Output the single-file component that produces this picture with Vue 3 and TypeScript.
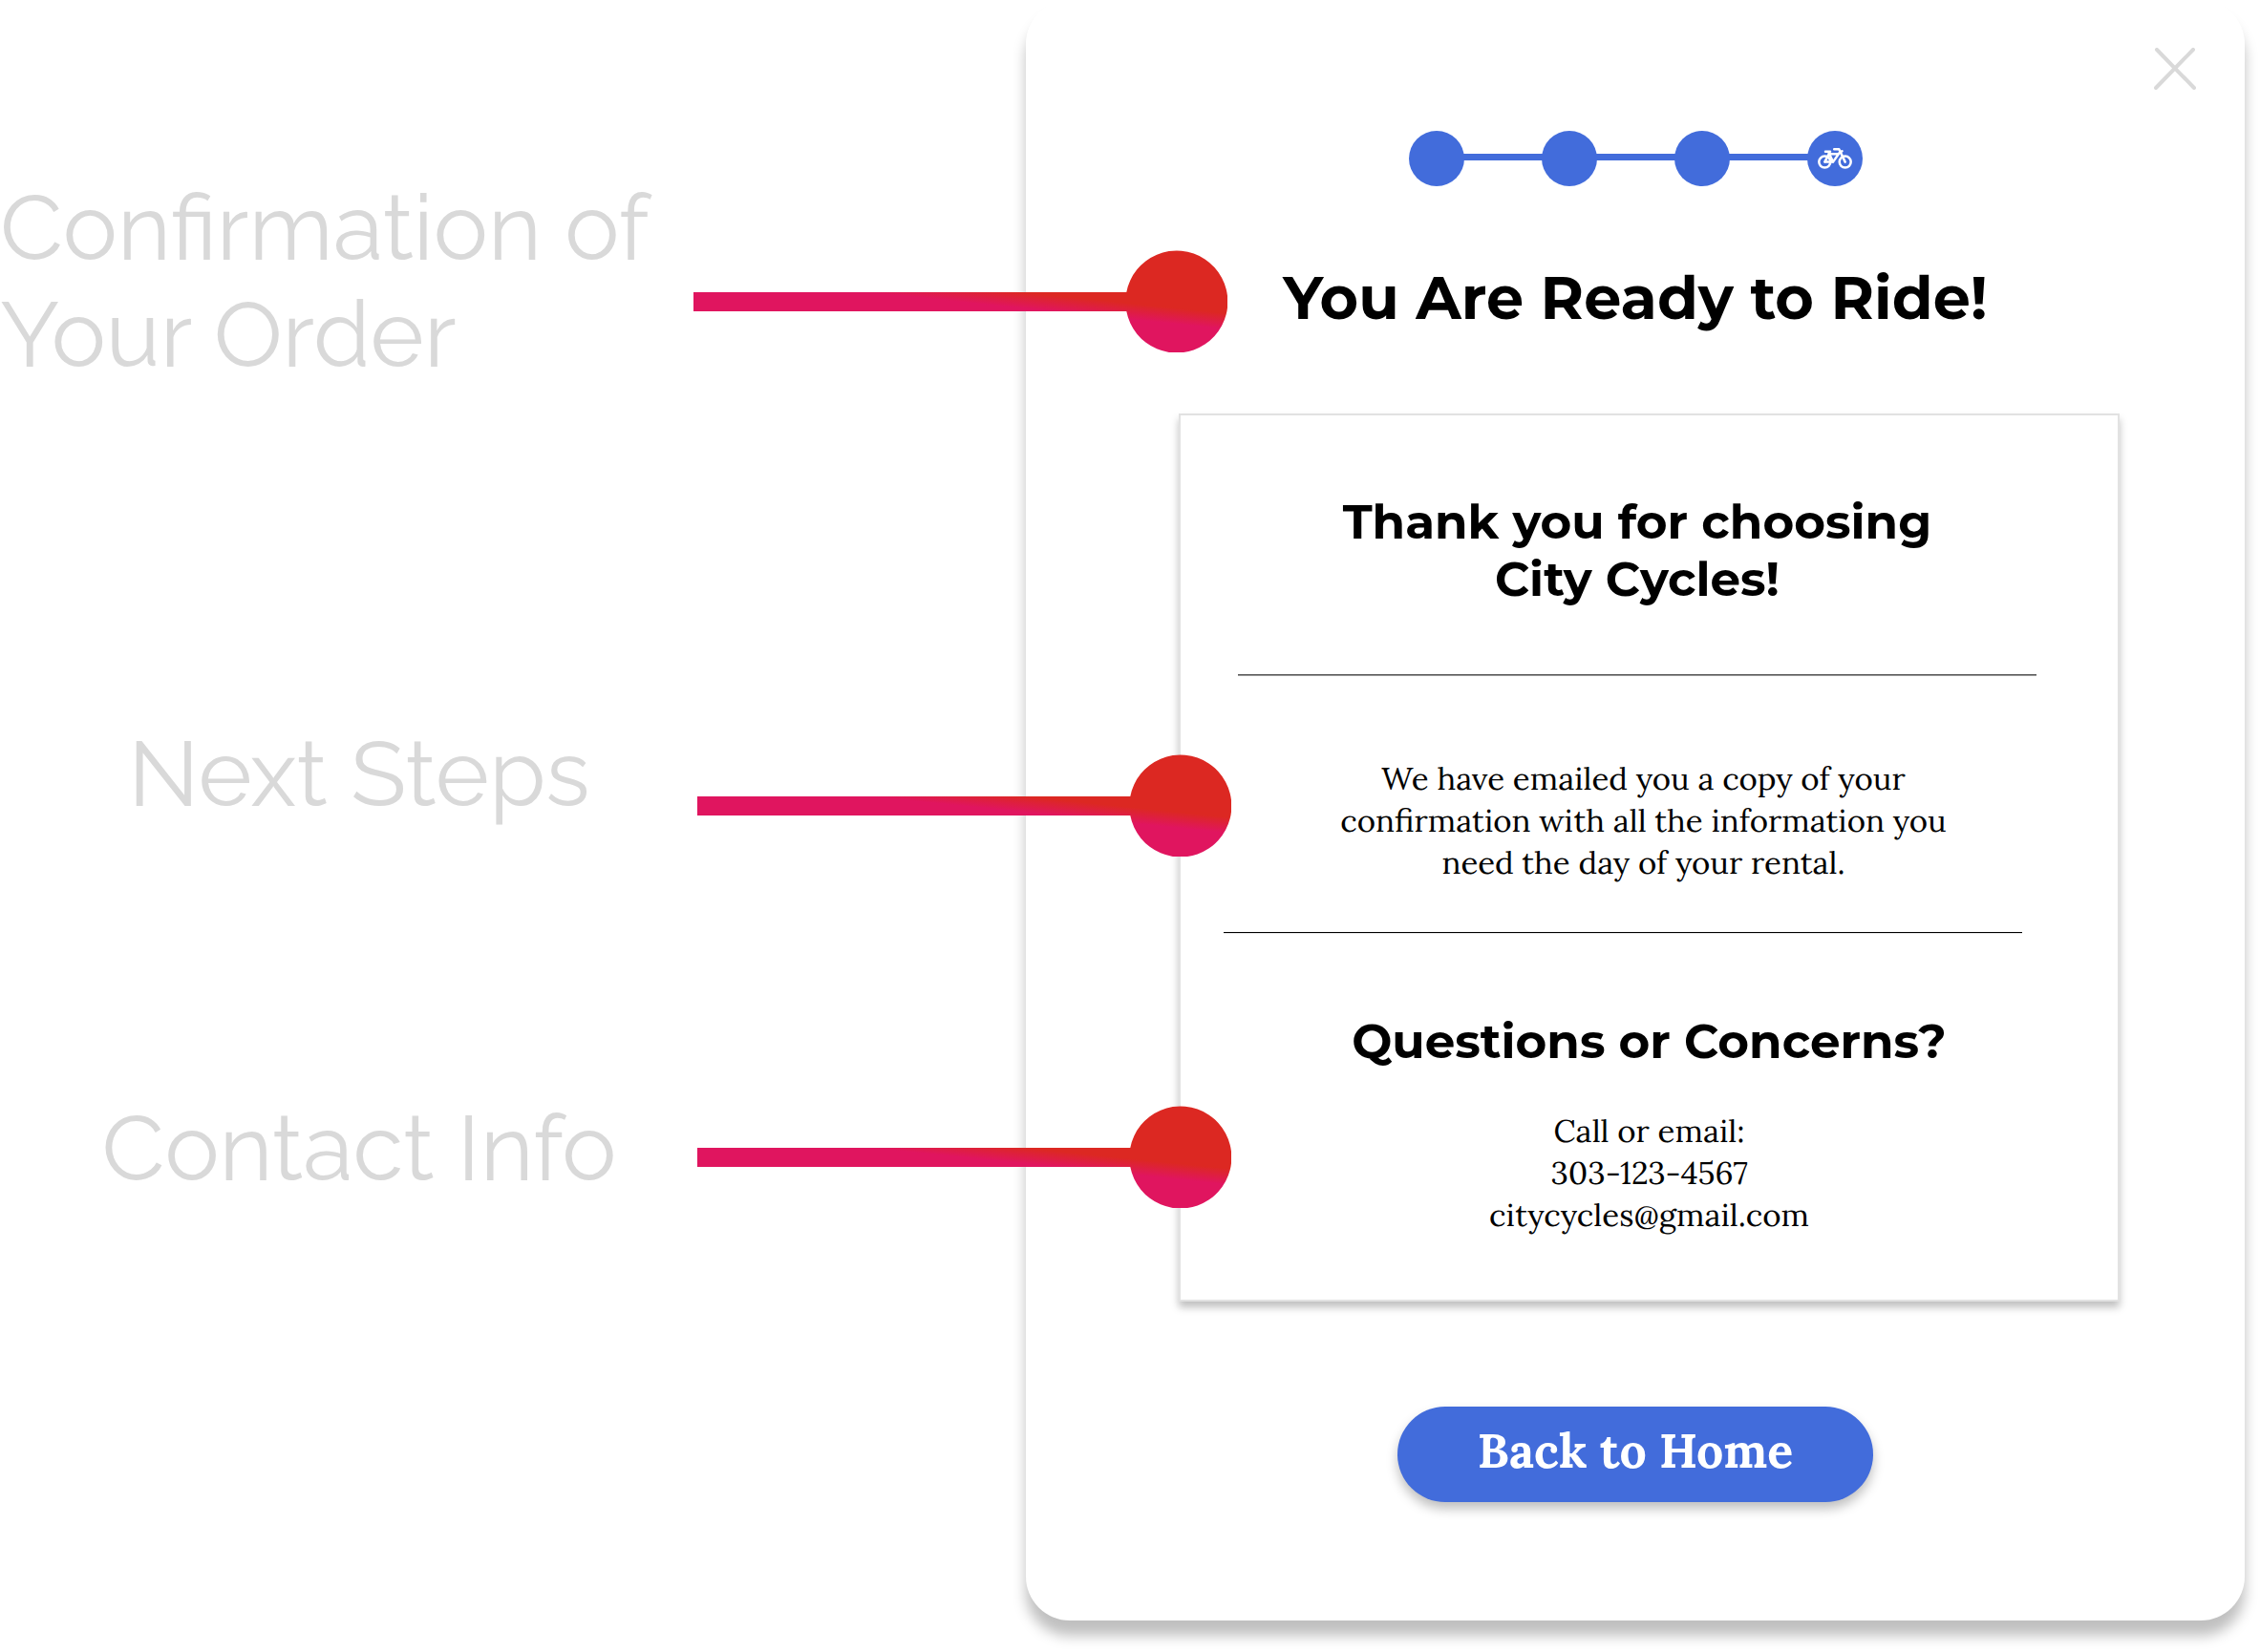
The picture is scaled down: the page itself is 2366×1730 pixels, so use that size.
<script setup lang="ts">
interface Callout {
  id: string
  lines: string[]
}

const callouts: Callout[] = [
  { id: 'confirmation', lines: ['Confirmation of', 'Your Order'] },
  { id: 'next', lines: ['Next Steps'] },
  { id: 'contact', lines: ['Contact Info'] },
]

const steps = [1, 2, 3, 4]
</script>

<template>
  <main class="page">
    <aside class="callouts">
      <div v-for="c in callouts" :key="c.id" class="callout" :class="c.id">
        <p class="label">
          <span v-for="line in c.lines" :key="line">{{ line }}</span>
        </p>
        <svg class="pointer" viewBox="0 0 559 107" aria-hidden="true">
          <defs>
            <linearGradient
              :id="`fade-${c.id}`"
              gradientUnits="userSpaceOnUse"
              x1="500"
              y1="60"
              x2="498.3"
              y2="76.6"
            >
              <stop offset="0" stop-color="#dc2822" />
              <stop offset="1" stop-color="#e0155f" />
            </linearGradient>
          </defs>
          <path
            :fill="`url(#fade-${c.id})`"
            d="M0 44H453.300A53.500 53.500 0 1 1 453.300 64H0Z"
          />
        </svg>
      </div>
    </aside>

    <section class="card">
      <header class="top">
        <button class="close" type="button" aria-label="Close">
          <svg viewBox="0 0 44 44" aria-hidden="true">
            <path d="M3 2L42 42M41 2L2 42" />
          </svg>
        </button>
      </header>

      <ol class="stepper">
        <li v-for="s in steps" :key="s" class="step">
          <svg v-if="s === steps.length" class="bike" viewBox="0 0 36 22" aria-hidden="true">
            <circle cx="7.300" cy="14.600" r="6" />
            <circle cx="28.700" cy="14.600" r="6" />
            <path d="M7.300 14.600H16L21.800 6.200H11.800L7.300 14.600M11 3.800L16 14.600M8 3.800H13M28.700 14.600L22.300 1.300H17.200M22.600 5L25.500 3.200" />
          </svg>
        </li>
      </ol>

      <h1 class="title">You Are Ready to Ride!</h1>

      <article class="panel">
        <h2 class="heading thanks">Thank you for choosing<br />City Cycles!</h2>
        <hr class="rule first" />
        <p class="text message">
          We have emailed you a copy of your<br />
          confirmation with all the information you<br />
          need the day of your rental.
        </p>
        <hr class="rule second" />
        <h2 class="heading questions">Questions or Concerns?</h2>
        <address class="text">
          Call or email:<br />
          <a href="tel:303-123-4567">303-123-4567</a><br />
          <a href="mailto:citycycles@gmail.com">citycycles@gmail.com</a>
        </address>
      </article>

      <button class="home" type="button">Back to Home</button>
    </section>
  </main>
</template>

<style>
body {
  background: #fff;
}
</style>

<style scoped>
.page {
  display: flex;
  align-items: flex-start;
  padding: 0 16px 33px 0;
  overflow: hidden;
}

/* annotations */
.callouts {
  position: relative;
  z-index: 1;
  box-sizing: border-box;
  flex: none;
  width: 1074px;
  padding-top: 182px;
  pointer-events: none;
}

.callout {
  display: flex;
  align-items: flex-start;
  margin-right: -215px;
}

.confirmation {
  margin-right: -211px;
}

.next {
  margin-top: 348px;
}

.contact {
  margin-top: 249px;
}

.label {
  flex: 1;
  box-sizing: border-box;
  margin: 0;
  padding-left: 22px;
  color: #d9d9d9;
  font: 400 96px/112px Raleway, Lato, sans-serif;
  text-align: center;
  white-space: nowrap;
}

.confirmation .label {
  padding-left: 0;
  text-align: left;
}

.label span {
  display: block;
}

.pointer {
  flex: none;
  width: 559px;
  height: 107px;
}

.confirmation .pointer {
  margin-top: 80px;
}

.next .pointer {
  margin-top: 36px;
}

.contact .pointer {
  margin-top: 12px;
}

/* confirmation card */
.card {
  display: flex;
  flex: 1;
  flex-direction: column;
  align-items: center;
  padding-bottom: 124px;
  border-radius: 46px;
  background: #fff;
  box-shadow: 0 16px 14px rgba(0, 0, 0, 0.25);
}

.top {
  display: flex;
  align-self: stretch;
  justify-content: flex-end;
  padding: 50px 51px 43px;
}

.close {
  width: 44px;
  height: 44px;
  padding: 0;
  border: 0;
  background: none;
}

.close svg {
  display: block;
  fill: none;
  stroke: #d9d9d9;
  stroke-width: 4;
  stroke-linecap: round;
}

.stepper {
  display: flex;
  gap: 81px;
  margin: 0;
  padding: 0;
  list-style: none;
}

.step {
  position: relative;
  display: flex;
  align-items: center;
  justify-content: center;
  width: 58px;
  height: 58px;
  border-radius: 50%;
  background: #426cdb;
}

.step + .step::before {
  position: absolute;
  top: 24px;
  right: 56px;
  width: 85px;
  height: 7px;
  background: #426cdb;
  content: '';
}

.bike {
  width: 36px;
  height: 22px;
  fill: none;
  stroke: #fff;
  stroke-width: 2.5;
  stroke-linecap: round;
  stroke-linejoin: round;
}

.title {
  margin: 77px 0 81px;
  color: #000;
  font: 700 62px/80px Montserrat, Inter, sans-serif;
}

.panel {
  align-self: stretch;
  margin: 0 131px 110px 160px;
  padding: 82px 0 67px;
  border: 2px solid #e2e2e2;
  background: #fff;
  box-shadow: 0 6px 8px rgba(0, 0, 0, 0.25);
  color: #000;
  text-align: center;
}

.heading {
  margin: 0;
  font: 700 50px/60px Montserrat, Inter, sans-serif;
}

.thanks {
  margin: 0 85px 69px 60px;
}

.rule {
  border: solid;
  border-width: 1px 0;
}

.rule.first {
  margin: 0 85px 85px 60px;
  border-color: #555 #999;
  border-top-color: #555;
  border-bottom-color: #999;
}

.rule.second {
  margin: 0 100px 83px 45px;
  border-top-color: #000;
  border-bottom-color: #e4e4e4;
}

.text {
  margin: 0;
  font: 400 33px/44px Lora, 'Liberation Serif', serif;
}

.message {
  margin: 0 72px 51px 60px;
}

.questions {
  margin-bottom: 41px;
}

.text a {
  color: inherit;
  text-decoration: none;
}

.home {
  width: 498px;
  height: 100px;
  padding: 0 0 8px;
  border: 0;
  border-radius: 50px;
  background: #426cdb;
  box-shadow: 0 7px 12px rgba(0, 0, 0, 0.25);
  color: #fff;
  font: 700 50px/60px Lora, 'Liberation Serif', serif;
}
</style>
